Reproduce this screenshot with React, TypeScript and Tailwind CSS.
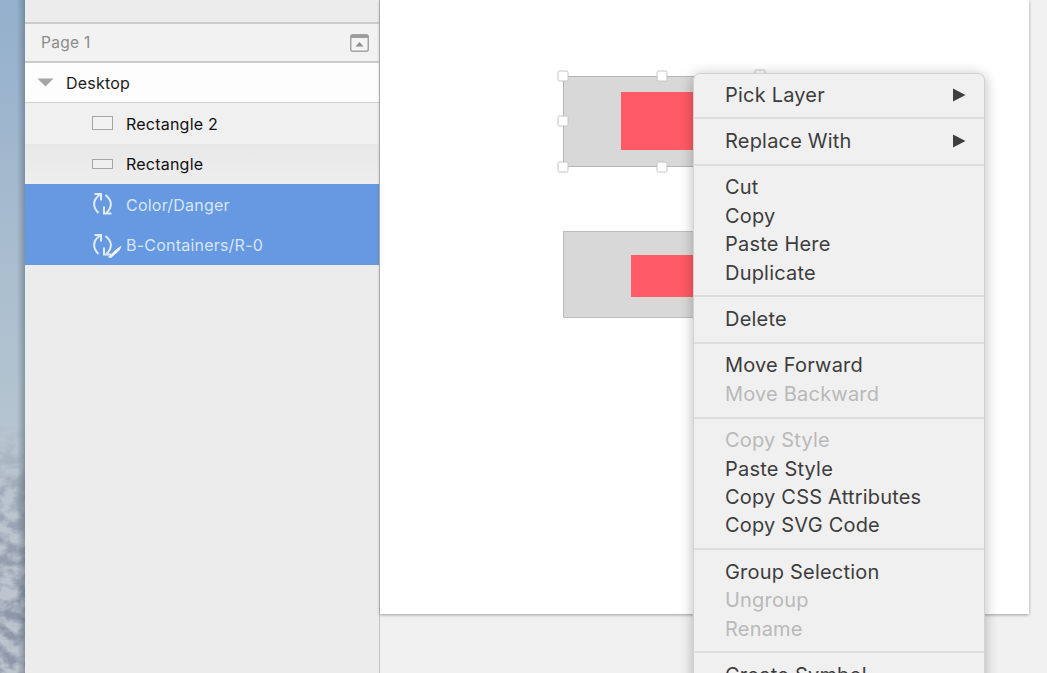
import React from "react";

function Sync({ pen }: { pen?: boolean }) {
  return (
    <svg width="32" height="26" viewBox="0 0 32 26" fill="none" stroke="#e2ecfa" strokeWidth="2" className="shrink-0">
      <path d="M7.5 4 C0.5 9 0.5 16 6.5 22" />
      <path d="M2.5 3 L9 3 L9 9.5" />
      <path d="M13.5 4 C20.5 9.5 20.5 16 14.5 22" />
      <path d="M12 15.5 L12 22.5 L19.5 22.5" />
      {pen && <path d="M16.5 25 L25 17 L29 14.5 L27 18.5 L19 25.5 Z" fill="#f2f6fd" stroke="#f2f6fd" strokeWidth="0.8" />}
    </svg>
  );
}

function LayerRow({ h, icon, label, className }: { h: number; icon: React.ReactNode; label: string; className: string }) {
  return (
    <div className={`flex items-center pl-[67px] text-[16px] tracking-[0.22px] ${className}`} style={{ height: h }}>
      <div className="w-[34px] flex items-center shrink-0 -mt-[1px]">{icon}</div>
      <span className="font-[420]">{label}</span>
    </div>
  );
}

function Item({ label, off, arrow }: { label: string; off?: boolean; arrow?: boolean }) {
  return (
    <div className={`h-[28.4px] flex items-center justify-between pl-[31px] pr-[18px] text-[20px] leading-none tracking-[0.2px] font-[420] ${off ? "text-[#b9b9b9]" : "text-[#3d3d3d]"}`}>
      <span className="-mt-[1px]">{label}</span>
      {arrow && (
        <svg width="14" height="14" viewBox="0 0 14 14" className="shrink-0 -mt-[1px]">
          <path d="M1 0.5 L13.5 7 L1 13.5 Z" fill="#3f3f3f" />
        </svg>
      )}
    </div>
  );
}

function Section({ children }: { children: React.ReactNode }) {
  return <div className="py-[8px] border-b-2 border-[#dedede] last:border-b-0">{children}</div>;
}

function Handle({ x, y }: { x: number; y: number }) {
  return (
    <div
      className="absolute w-[11px] h-[11px] bg-white border border-[#c4c4c4] rounded-[2px] -translate-x-1/2 -translate-y-1/2"
      style={{ left: x, top: y }}
    />
  );
}

export default function App() {
  return (
    <div className="flex w-[1047px] h-[673px] overflow-hidden bg-[#f1f1f1] font-['Inter','Liberation_Sans',sans-serif]">
      {/* wallpaper */}
      <div className="relative w-[25px] shrink-0 h-full overflow-hidden bg-gradient-to-b from-[#94b0cc] via-[#afc1cf] via-50% to-[#c2cbd2]">
        <svg width="25" height="673" className="absolute inset-0">
          <defs>
            <filter id="rock" x="0" y="0" width="100%" height="100%">
              <feTurbulence type="fractalNoise" baseFrequency="0.07 0.09" numOctaves="3" seed="11" />
              <feColorMatrix values="0 0 0 0 0.27  0 0 0 0 0.31  0 0 0 0 0.40  3 0 0 0 -1.05" />
              <feGaussianBlur stdDeviation="0.5" />
            </filter>
            <linearGradient id="fade" x1="0" y1="0" x2="0" y2="1">
              <stop offset="0" stopColor="#fff" stopOpacity="0" />
              <stop offset="0.25" stopColor="#fff" stopOpacity="0.6" />
              <stop offset="0.7" stopColor="#fff" stopOpacity="1" />
              <stop offset="1" stopColor="#fff" stopOpacity="1" />
            </linearGradient>
            <mask id="rockMask">
              <rect x="0" y="425" width="25" height="248" fill="url(#fade)" />
            </mask>
          </defs>
          <rect x="0" y="425" width="25" height="248" fill="#bcc4cd" mask="url(#rockMask)" />
          <rect x="0" y="425" width="25" height="248" filter="url(#rock)" mask="url(#rockMask)" />
        </svg>
        <div className="absolute top-0 bottom-0 right-0 w-[8px] bg-gradient-to-r from-transparent to-[#4f5d6c]/45" />
      </div>

      {/* sidebar */}
      <div className="w-[355px] shrink-0 h-full flex flex-col bg-[#ececec] border-r border-[#c4c4c4]">
        <div className="h-[24px] shrink-0 bg-[#ececec] border-b-2 border-[#cbcbcb]" />
        <div className="h-[39px] shrink-0 flex items-center justify-between pl-[16px] pr-[10px] bg-[#f2f2f2] border-b-2 border-[#cbcbcb] text-[15.5px] tracking-[0.3px] text-[#8b8b8b]">
          <span className="mt-[1px] font-[420]">Page 1</span>
          <svg width="19" height="18" viewBox="0 0 19 18" fill="none">
            <rect x="0.75" y="0.75" width="17.5" height="16.5" rx="2" fill="#f4f4f4" stroke="#a3a3a3" strokeWidth="1.5" />
            <rect x="1" y="1" width="17" height="3" fill="#9c9c9c" />
            <path d="M9.5 8 L13.5 12.5 L5.5 12.5 Z" fill="#8f8f8f" />
          </svg>
        </div>
        <div className="h-[40px] shrink-0 flex items-center pl-[12px] bg-[#fdfdfd] border-b border-[#cfcfcf] text-[16px] tracking-[0.22px] text-[#1c1c1c]">
          <svg width="17" height="9" viewBox="0 0 17 9" className="shrink-0 mr-[12px]">
            <path d="M0.5 0.5 H16.5 L8.5 8.5 Z" fill="#a4a4a4" />
          </svg>
          <span className="mt-[1px] font-[420]">Desktop</span>
        </div>
        <LayerRow
          h={41}
          className="bg-[#f0f0f0] text-[#111111]"
          label="Rectangle 2"
          icon={<div className="w-[21px] h-[14px] border-[1.5px] border-[#a6a6a6] bg-[#f2f2f2]" />}
        />
        <LayerRow
          h={40}
          className="bg-gradient-to-b from-[#e8e8e8] to-[#eeeeee] text-[#111111]"
          label="Rectangle"
          icon={<div className="w-[21px] h-[10px] border-[1.5px] border-[#a6a6a6] bg-[#efefef]" />}
        />
        <div className="bg-[#6699e2] text-[#d8e5f8]">
          <LayerRow h={41} className="" label="Color/Danger" icon={<Sync />} />
          <LayerRow h={40} className="" label="B-Containers/R-0" icon={<Sync pen />} />
        </div>
        <div className="flex-1 bg-[#ececec]" />
      </div>

      {/* canvas */}
      <div className="relative flex-1 h-full">
        <div className="absolute left-0 top-0 w-[649px] h-[614px] bg-white shadow-[0_1px_3px_rgba(0,0,0,0.35)]" />

        <div className="absolute left-[183px] top-[76px] w-[200px] h-[91px] bg-[#d8d8d8] border border-[#b5b5b5]" />
        <div className="absolute left-[241px] top-[92px] w-[100px] h-[58px] bg-[#ff5a65]" />
        <div className="absolute left-[183px] top-[231px] w-[200px] h-[87px] bg-[#d8d8d8] border border-[#bdbdbd]" />
        <div className="absolute left-[251px] top-[255px] w-[90px] h-[42px] bg-[#ff5a65]" />

        <Handle x={183} y={76} />
        <Handle x={282} y={76} />
        <Handle x={380} y={75} />
        <Handle x={183} y={121} />
        <Handle x={183} y={167} />
        <Handle x={282} y={167} />

        {/* context menu */}
        <div className="absolute left-[313px] top-[74px] w-[292px] bg-[#f0f0f0] rounded-t-[7px] border border-[#d2d2d2] shadow-[0_2px_14px_rgba(0,0,0,0.28)] -mt-px">
          <div className="-mt-[1px]">
            <Section>
              <Item label="Pick Layer" arrow />
            </Section>
            <Section>
              <Item label="Replace With" arrow />
            </Section>
            <Section>
              <Item label="Cut" />
              <Item label="Copy" />
              <Item label="Paste Here" />
              <Item label="Duplicate" />
            </Section>
            <Section>
              <Item label="Delete" />
            </Section>
            <Section>
              <Item label="Move Forward" />
              <Item label="Move Backward" off />
            </Section>
            <Section>
              <Item label="Copy Style" off />
              <Item label="Paste Style" />
              <Item label="Copy CSS Attributes" />
              <Item label="Copy SVG Code" />
            </Section>
            <Section>
              <Item label="Group Selection" />
              <Item label="Ungroup" off />
              <Item label="Rename" off />
            </Section>
            <Section>
              <Item label="Create Symbol" />
            </Section>
          </div>
        </div>
      </div>
    </div>
  );
}
